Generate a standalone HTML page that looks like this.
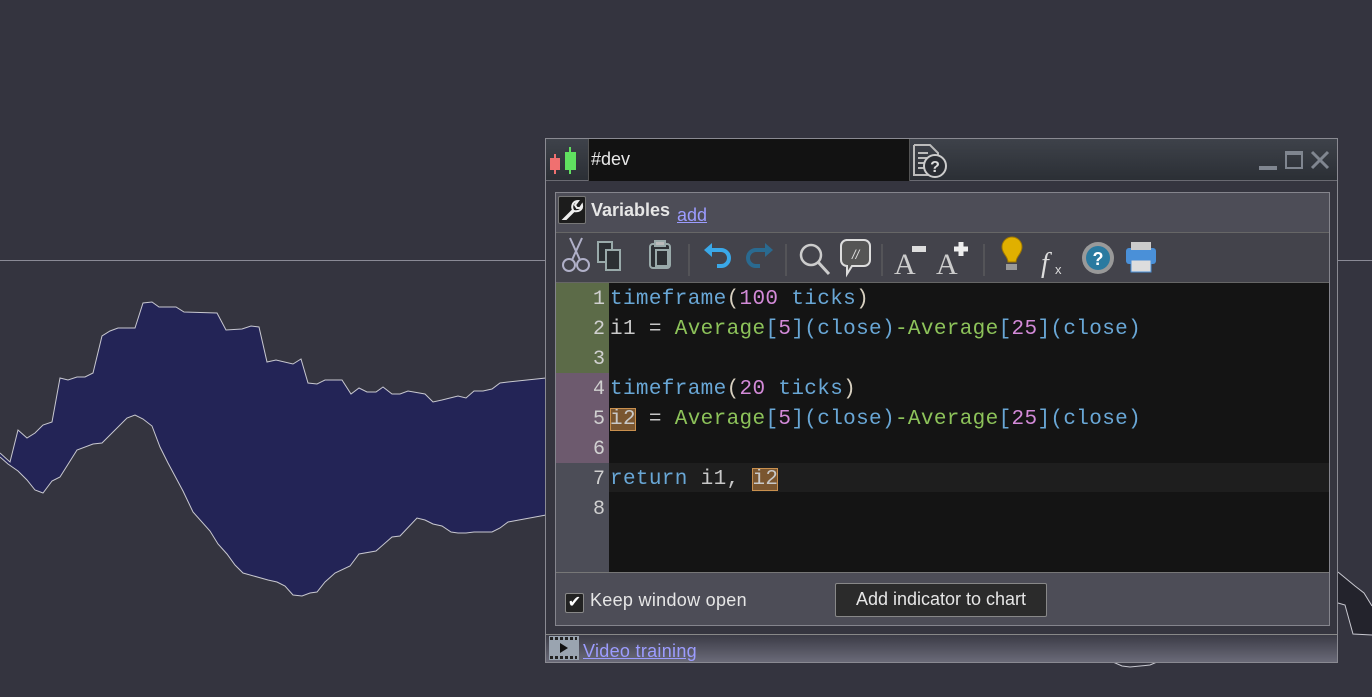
<!DOCTYPE html>
<html><head><meta charset="utf-8"><style>
*{margin:0;padding:0;box-sizing:border-box}
body{width:1372px;height:697px;background:#34343f;position:relative;overflow:hidden;font-family:"Liberation Sans",sans-serif}
.abs{position:absolute}
.code{font-family:"Liberation Mono",monospace;font-size:21px;letter-spacing:0.35px;color:#c8c8c8;white-space:pre;line-height:30px}
.k{color:#69a7d6}.f{color:#8dc35a}.n{color:#d38ad8}.p{color:#d8d0c0}.o{color:#8dc35a}
.hl{background:#7a5630;outline:1px solid #c9904e;outline-offset:-1px}
.ln{color:#d0d0d0;text-align:right;width:49px;font-family:"Liberation Mono",monospace;font-size:20px;line-height:30px}
</style></head><body>
<svg class="abs" style="left:0;top:0" width="1372" height="697">
<line x1="0" y1="260.5" x2="1372" y2="260.5" stroke="#8a8a96" stroke-width="1"/>
<polygon fill="#232456" points="0,453 10,462 18,430 27,438 35,433 43,425 52,422 60,378 68,380 77,377 85,377 93,373 102,336 110,331 118,328 135,328 143,303 152,302 159,307 176,307 184,312 217,313 226,330 242,329 251,326 259,327 267,362 276,360 293,364 301,359 308,383 317,384 325,380 342,380 351,394 359,388 367,392 376,392 383,387 392,394 400,394 408,391 425,394 433,402 442,400 458,396 466,398 474,391 483,391 492,389 500,383 508,382 546,378 546,515 508,522 500,528 492,532 474,532 466,533 458,533 451,532 442,526 433,524 425,520 417,518 400,536 392,537 376,551 359,554 350,566 335,573 325,582 317,592 310,593 302,596 293,595 285,586 277,582 268,580 243,573 235,565 227,554 218,544 210,531 193,512 183,491 168,463 160,447 152,426 143,419 135,415 127,418 102,443 93,444 77,450 60,477 52,481 43,493 35,490 27,480 18,471 8,464 0,457"/>
<polyline fill="none" stroke="#c8c8d0" stroke-width="1" points="0,453 10,462 18,430 27,438 35,433 43,425 52,422 60,378 68,380 77,377 85,377 93,373 102,336 110,331 118,328 135,328 143,303 152,302 159,307 176,307 184,312 217,313 226,330 242,329 251,326 259,327 267,362 276,360 293,364 301,359 308,383 317,384 325,380 342,380 351,394 359,388 367,392 376,392 383,387 392,394 400,394 408,391 425,394 433,402 442,400 458,396 466,398 474,391 483,391 492,389 500,383 508,382 546,378"/>
<polyline fill="none" stroke="#c8c8d0" stroke-width="1" points="0,457 8,464 18,471 27,480 35,490 43,493 52,481 60,477 77,450 93,444 102,443 127,418 135,415 143,419 152,426 160,447 168,463 183,491 193,512 210,531 218,544 227,554 235,565 243,573 268,580 277,582 285,586 293,595 302,596 310,593 317,592 325,582 335,573 350,566 359,554 376,551 392,537 400,536 417,518 425,520 433,524 442,526 451,532 458,533 466,533 474,532 492,532 500,528 508,522 546,515"/>
<polygon fill="#23232c" points="1338,572 1355,586 1364,593 1372,606 1372,635 1353,634 1345,605 1338,603"/>
<polyline fill="none" stroke="#c8c8d0" points="1338,572 1355,586 1364,593 1372,606"/>
<polyline fill="none" stroke="#c8c8d0" points="1338,603 1345,605 1353,634 1372,635"/>
<polyline fill="none" stroke="#c8c8d0" points="1113,662 1122,666 1130,667 1150,665 1157,662"/>
</svg>

<div class="abs" style="left:545px;top:138px;width:793px;height:525px;background:#35353f;border:1px solid #8a8a92"></div>
<div class="abs" style="left:546px;top:139px;width:791px;height:42px;background:linear-gradient(#3e424a,#2b2f35);border-bottom:1px solid #6a6a72"></div>
<svg class="abs" style="left:548px;top:144px" width="32" height="32">
<line x1="7" y1="10" x2="7" y2="30" stroke="#f07070" stroke-width="2"/><rect x="2" y="14" width="10" height="12" fill="#f07070"/>
<line x1="22" y1="3" x2="22" y2="30" stroke="#60e060" stroke-width="2"/><rect x="17" y="8" width="11" height="18" fill="#60e060"/>
</svg>
<div class="abs" style="left:588px;top:139px;width:322px;height:42px;background:#121212;border-left:1px solid #555;border-right:1px solid #555;color:#e8e8e8;font-size:18px;line-height:40px;padding-left:2px">#dev</div>
<svg class="abs" style="left:912px;top:143px" width="40" height="36">
<path d="M2 2h16l8 8v8" fill="none" stroke="#bbb" stroke-width="2"/><path d="M2 2v30h16" fill="none" stroke="#bbb" stroke-width="2"/>
<path d="M6 10h10M6 15h10M6 20h8M6 25h8" stroke="#bbb" stroke-width="2"/>
<circle cx="23" cy="23" r="11" fill="#2a2d33" stroke="#ccc" stroke-width="2"/>
<text x="23" y="29" text-anchor="middle" fill="#ddd" font-size="16" font-weight="bold" font-family="Liberation Sans">?</text>
</svg>
<div class="abs" style="left:1259px;top:166px;width:18px;height:4px;background:#808690"></div>
<div class="abs" style="left:1285px;top:151px;width:18px;height:18px;border:2px solid #808690;border-top-width:4px"></div>
<svg class="abs" style="left:1310px;top:150px" width="20" height="20"><path d="M2 2L18 18M18 2L2 18" stroke="#808690" stroke-width="3"/></svg>

<div class="abs" style="left:555px;top:192px;width:775px;height:434px;background:#4d4d57;border:1px solid #85858d"></div>
<div class="abs" style="left:558px;top:196px;width:28px;height:28px;background:#1c1c1c;border:1px solid #777;border-radius:2px"></div>
<svg class="abs" style="left:559px;top:197px" width="26" height="26"><path d="M5 22l9-9c-2-4 0-9 5-9l-3 4 2 3 3 0 2-3c1 5-4 7-8 6l-8 8z" fill="none" stroke="#eee" stroke-width="2"/></svg>
<div class="abs" style="left:591px;top:200px;color:#e6e6e6;font-weight:bold;font-size:18px">Variables</div>
<div class="abs" style="left:677px;top:205px;color:#9c9cff;font-size:18px;text-decoration:underline">add</div>
<div class="abs" style="left:556px;top:232px;width:773px;height:50px;background:#43434b;border-top:1px solid #666"></div>
<svg class="abs" style="left:556px;top:232px" width="773" height="50">
<g stroke="#b0b0c8" stroke-width="2" fill="none"><circle cx="13" cy="33" r="6"/><circle cx="27" cy="33" r="6"/><path d="M16 28L26 6M24 28L14 6"/></g>
<g fill="#2c3034" stroke="#9aa" stroke-width="2"><rect x="42" y="10" width="14" height="20"/><rect x="50" y="18" width="14" height="20"/></g>
<g fill="#2c3034" stroke="#9aa" stroke-width="2"><rect x="94" y="12" width="20" height="24" rx="3"/><rect x="100" y="18" width="12" height="16"/><rect x="99" y="9" width="10" height="5" fill="#bbb"/></g>
<line x1="133" y1="12" x2="133" y2="44" stroke="#666"/>
<path d="M155 18h10a8 8 0 0 1 0 16h-4" fill="none" stroke="#3aa8e8" stroke-width="4"/><path d="M148 18l8-7v14z" fill="#3aa8e8"/>
<path d="M210 18h-10a8 8 0 0 0 0 16h4" fill="none" stroke="#2a6a90" stroke-width="4"/><path d="M217 18l-8-7v14z" fill="#2a6a90"/>
<line x1="230" y1="12" x2="230" y2="44" stroke="#666"/>
<circle cx="255" cy="23" r="10" fill="none" stroke="#ccc" stroke-width="2.5"/><path d="M262 30l11 12" stroke="#ccc" stroke-width="3"/>
<path d="M290 8h18a6 6 0 0 1 6 6v14a6 6 0 0 1-6 6h-12l-5 8v-8a6 6 0 0 1-6-6v-14a6 6 0 0 1 6-6z" fill="#555" stroke="#ddd" stroke-width="2"/>
<text x="296" y="27" fill="#ddd" font-size="13" font-style="italic">//</text>
<line x1="326" y1="12" x2="326" y2="44" stroke="#666"/>
<text x="338" y="42" fill="#ccc" font-size="30" font-family="Liberation Serif">A</text><rect x="356" y="14" width="14" height="6" fill="#ddd"/>
<text x="380" y="42" fill="#ccc" font-size="30" font-family="Liberation Serif">A</text><path d="M398 17h14M405 10v14" stroke="#eee" stroke-width="5"/>
<line x1="428" y1="12" x2="428" y2="44" stroke="#666"/>
<path d="M452 30c0-6-6-8-6-15a10 10 0 0 1 20 0c0 7-6 9-6 15z" fill="#e0b000" stroke="#a07800"/><rect x="450" y="32" width="11" height="6" fill="#999"/>
<text x="485" y="40" fill="#ddd" font-size="28" font-style="italic" font-family="Liberation Serif">f</text><text x="499" y="42" fill="#ddd" font-size="13">x</text>
<circle cx="542" cy="26" r="16" fill="#999"/><circle cx="542" cy="26" r="12" fill="#2a7aa0"/><text x="542" y="33" fill="#fff" font-size="18" font-weight="bold" text-anchor="middle">?</text>
<rect x="570" y="16" width="30" height="16" rx="3" fill="#4a90d8"/><rect x="575" y="10" width="20" height="8" fill="#ccc"/><rect x="575" y="28" width="20" height="12" fill="#ddd" stroke="#4a90d8"/>
</svg>

<div class="abs" style="left:556px;top:282px;width:773px;height:290px;background:#141414;border-top:1px solid #666"></div>
<div class="abs" style="left:556px;top:283px;width:53px;height:289px;background:#4c4d57"></div>
<div class="abs" style="left:556px;top:283px;width:53px;height:90px;background:#5c6b48"></div>
<div class="abs" style="left:556px;top:373px;width:53px;height:90px;background:#6d5a6e"></div>
<div class="abs" style="left:609px;top:463px;width:720px;height:29px;background:#1e1e1e"></div>
<div class="abs ln" style="left:556px;top:285px">1<br>2<br>3<br>4<br>5<br>6<br>7<br>8</div>
<div class="abs code" style="left:610px;top:285px"><span class="k">timeframe</span><span class="p">(</span><span class="n">100</span> <span class="k">ticks</span><span class="p">)</span>
i1 = <span class="f">Average</span><span class="k">[</span><span class="n">5</span><span class="k">](close)</span><span class="f">-Average</span><span class="k">[</span><span class="n">25</span><span class="k">](close)</span>

<span class="k">timeframe</span><span class="p">(</span><span class="n">20</span> <span class="k">ticks</span><span class="p">)</span>
<span class="hl">i2</span> = <span class="f">Average</span><span class="k">[</span><span class="n">5</span><span class="k">](close)</span><span class="f">-Average</span><span class="k">[</span><span class="n">25</span><span class="k">](close)</span>

<span class="k">return</span> i1, <span class="hl">i2</span></div>
<div class="abs" style="left:556px;top:572px;width:773px;height:1px;background:#777"></div>

<div class="abs" style="left:565px;top:593px;width:19px;height:20px;background:#222;border:1px solid #888;border-radius:2px;color:#fff;font-size:16px;line-height:18px;text-align:center">✔</div>
<div class="abs" style="left:590px;top:590px;color:#e6e6e6;font-size:18px;letter-spacing:0.3px">Keep window open</div>
<div class="abs" style="left:835px;top:583px;width:212px;height:34px;background:#2b2b2b;border:1px solid #888;border-radius:2px;color:#e6e6e6;font-size:18px;line-height:31px;text-align:center">Add indicator to chart</div>

<div class="abs" style="left:546px;top:634px;width:791px;height:28px;background:linear-gradient(#3b3b46,#6a6a78);border-top:1px solid #888"></div>
<svg class="abs" style="left:548px;top:636px" width="32" height="24"><rect x="1" y="0" width="30" height="24" fill="#9aa4b0"/><g fill="#222"><rect x="2" y="1" width="27" height="3"/><rect x="2" y="20" width="27" height="3"/></g><g fill="#9aa4b0"><rect x="5" y="1" width="2" height="3"/><rect x="10" y="1" width="2" height="3"/><rect x="15" y="1" width="2" height="3"/><rect x="20" y="1" width="2" height="3"/><rect x="25" y="1" width="2" height="3"/><rect x="5" y="20" width="2" height="3"/><rect x="10" y="20" width="2" height="3"/><rect x="15" y="20" width="2" height="3"/><rect x="20" y="20" width="2" height="3"/><rect x="25" y="20" width="2" height="3"/></g><path d="M12 7l8 5-8 5z" fill="#111"/></svg>
<div class="abs" style="left:583px;top:641px;color:#9c9cff;font-size:18px;text-decoration:underline;letter-spacing:0.3px">Video training</div>
</body></html>
